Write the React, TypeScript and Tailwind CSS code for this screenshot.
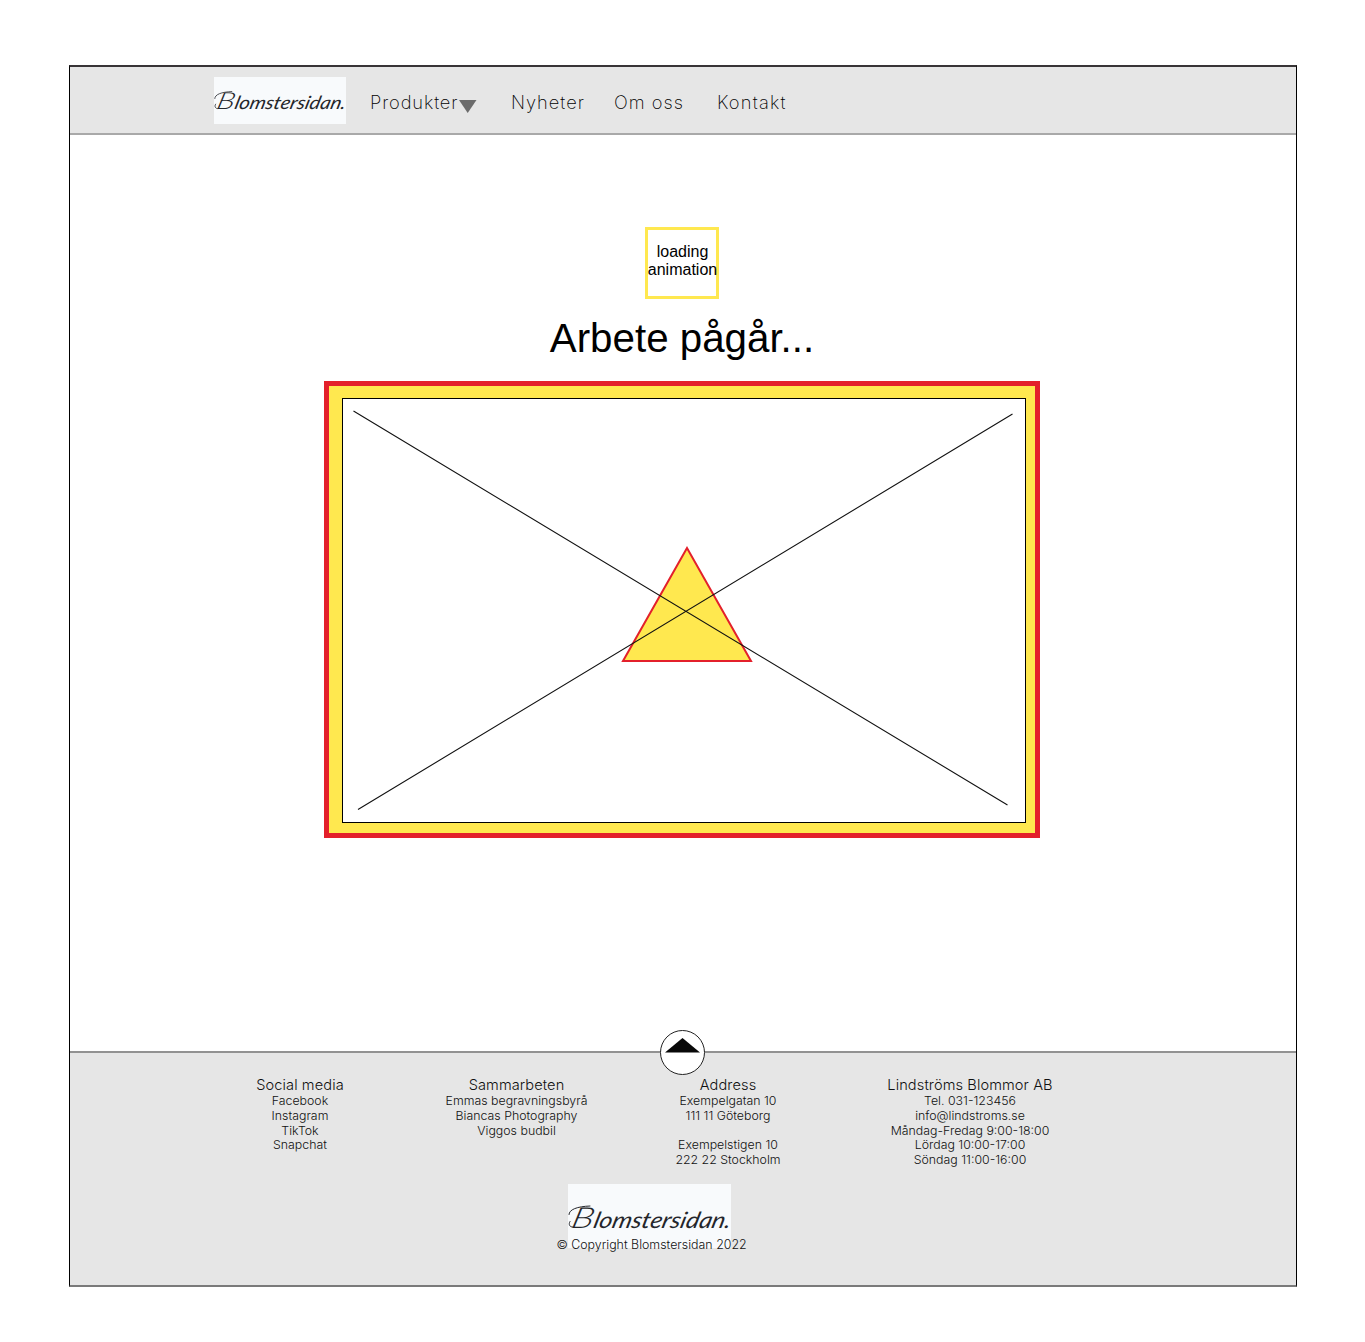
type LogoProps = { className: string; baseline: number; height: number };

function Logo({ className, baseline, height }: LogoProps) {
  return (
    <svg className={className} viewBox={`0 0 163 ${height}`} role="img" aria-label="Blomstersidan">
      <rect width="163" height={height} fill="#f8fafc" />
      <g transform={`translate(0 ${baseline})`} fill="#24262b">
        <path
          d="M1 -13C1 -18 9 -21 22 -21.5M5 -0.5C2 0 0 -3 2 -6"
          fill="none"
          stroke="#24262b"
          strokeWidth="1"
          strokeLinecap="round"
        />
        <g transform="skewX(-14)" fontFamily="Lato, sans-serif" fontStyle="italic" fontWeight="400">
          <text x="2" y="0" fontSize="29" fontWeight="300" textLength="22" lengthAdjust="spacingAndGlyphs">
            B
          </text>
          <text x="24.5" y="0" fontSize="22.5" textLength="137" lengthAdjust="spacingAndGlyphs">
            lomstersidan.
          </text>
        </g>
      </g>
    </svg>
  );
}

const columns = [
  { title: "Social media", width: "w-[180px]", lines: ["Facebook", "Instagram", "TikTok", "Snapchat"] },
  { title: "Sammarbeten", width: "w-[253px]", lines: ["Emmas begravningsbyrå", "Biancas Photography", "Viggos budbil"] },
  { title: "Address", width: "w-[170px]", lines: ["Exempelgatan 10", "111 11 Göteborg", "", "Exempelstigen 10", "222 22 Stockholm"] },
  {
    title: "Lindströms Blommor AB",
    width: "w-[314px]",
    lines: ["Tel. 031-123456", "info@lindstroms.se", "Måndag-Fredag 9:00-18:00", "Lördag 10:00-17:00", "Söndag 11:00-16:00"],
  },
];

export default function App() {
  return (
    <div className="h-[1342px] w-[1365px] bg-white pt-[65px] pl-[69px] font-['Inter',sans-serif] text-[#111]">
      <div className="flex h-[1222px] w-[1228px] flex-col border-x border-t-2 border-b-2 border-x-black border-t-[#383436] border-b-[#7a7a7a]">
        <header className="flex h-[68px] shrink-0 items-start border-b-2 border-[#a9a9a9] bg-[#e6e6e6] pl-[144px] font-extralight">
          <Logo className="mt-[10px] h-[47px] w-[132px] shrink-0" baseline={39.5} height={58} />
          <nav className="flex pt-[21px] text-[18.3px] leading-7 tracking-[1px] whitespace-nowrap text-black">
            <a className="flex w-[141px] pl-6">
              <span className="w-[89px] tracking-[0.9px]">Produkter</span>
              <svg className="mt-[12px] h-[13px] w-[18px] shrink-0" viewBox="0 0 18 13">
                <path d="M0 0H17.5L8.7 13Z" fill="#6b6b6b" />
              </svg>
            </a>
            <a className="ml-[24px] w-[103px]">Nyheter</a>
            <a className="w-[103px]">Om oss</a>
            <a className="tracking-[1.2px]">Kontakt</a>
          </nav>
        </header>

        <main className="flex h-[916px] shrink-0 flex-col items-center pr-[2px] font-['Liberation_Sans',Arial,sans-serif] text-black">
          <div className="mt-[92px] flex h-[72px] w-[74px] flex-col items-center border-3 border-[#ffe84f] pt-[13px] pl-px text-[16px] leading-[18px]">
            <span>loading</span>
            <span>animation</span>
          </div>
          <h1 className="mt-[16px] text-[40.3px] leading-[48px]">Arbete pågår...</h1>
          <div className="mt-[18px] h-[457px] w-[716px] border-5 border-[#e3202b] bg-[#ffe84f] pt-[12px] pl-[13px]">
            <div className="h-[425px] w-[684px] border border-black bg-white">
              <svg className="block h-[423px] w-[682px]" viewBox="343 399 682 423">
                <path d="M687 548L623 661H751Z" fill="#ffe84f" stroke="#e3202b" strokeWidth="2" />
                <path d="M353.5 411L1007.5 805M1012.5 414L358 809.5" stroke="#111" strokeWidth="1.1" />
              </svg>
            </div>
          </div>
        </main>

        <footer className="relative flex-1 border-t-2 border-[#929292] bg-[#e6e6e6] font-light">
          <button className="absolute -top-[24px] left-[589px] size-[47px]" aria-label="Till toppen">
            <svg className="block size-full" viewBox="0 0 47 47">
              <circle cx="23.5" cy="23.5" r="22" fill="#fff" stroke="#222" />
              <path d="M6 23.5L23.5 9L41 23.5Z" fill="#080808" />
            </svg>
          </button>
          <div className="flex pt-[23px] pl-[140px] text-center">
            {columns.map((column) => (
              <section key={column.title} className={column.width}>
                <h2 className="text-[14.6px] leading-[18px] tracking-[0.1px]">{column.title}</h2>
                {column.lines.map((line, i) => (
                  <p key={i} className="h-[14.75px] text-[12.35px] leading-[14.75px] whitespace-nowrap">{line}</p>
                ))}
              </section>
            ))}
          </div>
          <div className="mt-[16px] flex w-[1163px] flex-col items-center">
            <Logo className="mr-[4px] h-[64px] w-[163px]" baseline={43.5} height={64} />
            <p className="-mt-[11px] text-[12.4px] leading-[15px]">© Copyright Blomstersidan 2022</p>
          </div>
        </footer>
      </div>
    </div>
  );
}
